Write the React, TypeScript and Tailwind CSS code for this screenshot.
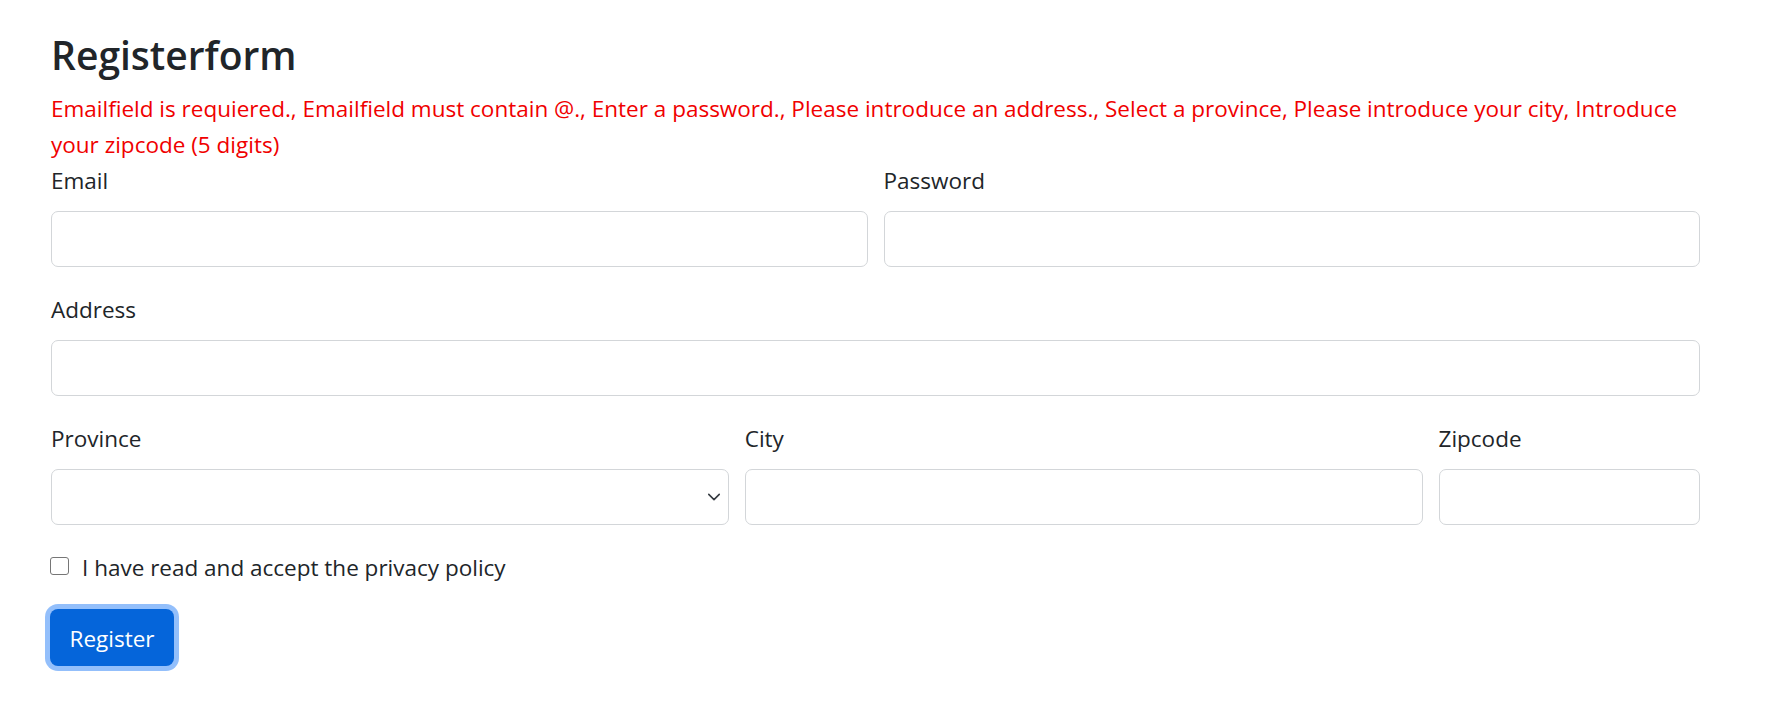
import React from "react";

function Field({ label, span, select }: { label: string; span: string; select?: boolean }) {
  return (
    <div className={span}>
      <label className="block text-[22.5px] leading-[36px] mb-[12px]">{label}</label>
      {select ? (
        <div className="h-[56px] rounded-[7px] border border-[#d3d6d9] bg-white flex items-center justify-end pr-[7px]">
          <svg width="14" height="14" viewBox="0 0 16 16" fill="none">
            <path d="M2 5l6 6 6-6" stroke="#343a40" strokeWidth="1.8" strokeLinecap="round" strokeLinejoin="round" />
          </svg>
        </div>
      ) : (
        <div className="h-[56px] rounded-[7px] border border-[#d3d6d9] bg-white" />
      )}
    </div>
  );
}

export default function App() {
  return (
    <div className="min-h-screen bg-white pl-[51px] pr-[69px] pt-[30px] font-['Open_Sans',sans-serif] text-[#212529]">
      <h3 className="text-[39px] leading-[50px] font-semibold mb-[11px]">Registerform</h3>
      <p className="text-[22.5px] leading-[36px] text-[#f00000]">
        Emailfield is requiered., Emailfield must contain @., Enter a password., Please introduce an address., Select a province, Please introduce your city, Introduce your zipcode (5 digits)
      </p>
      <div className="grid grid-cols-12 gap-x-4 gap-y-[25px]">
        <Field label="Email" span="col-span-6" />
        <Field label="Password" span="col-span-6" />
        <Field label="Address" span="col-span-12" />
        <Field label="Province" span="col-span-5" select />
        <Field label="City" span="col-span-5" />
        <Field label="Zipcode" span="col-span-2" />
      </div>
      <div className="mt-[25px] flex items-start gap-[13px]">
        <div className="mt-[7px] ml-[-1px] w-[19px] h-[18px] rounded-[3px] border-[1.5px] border-[#767676] bg-white" />
        <span className="text-[22.5px] leading-[36px]">I have read and accept the privacy policy</span>
      </div>
      <button className="mt-[23px] ml-[-1px] h-[57px] w-[124px] rounded-[8px] bg-[#0565da] text-white text-[22.5px] leading-[36px] pt-[2px] shadow-[0_0_0_5px_#93bffb]">
        Register
      </button>
    </div>
  );
}
